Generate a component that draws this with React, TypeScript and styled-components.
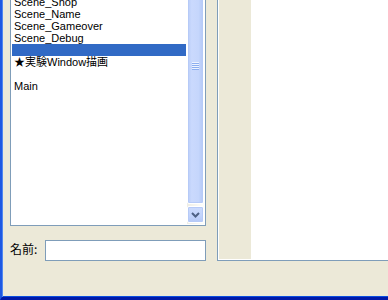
import React from "react";
import styled, { createGlobalStyle } from "styled-components";

const Global = createGlobalStyle`
  html, body { margin: 0; padding: 0; }
  body {
    background: #ECE9D8;
    overflow: hidden;
    font-family: "Liberation Sans", "Noto Sans CJK JP", sans-serif;
  }
`;

const Frame = styled.div`
  box-sizing: border-box;
  width: 388px;
  height: 300px;
  overflow: hidden;
  background: #ECE9D8;
  border-left: 2px solid #1E58E2;
  border-bottom: 3px solid #0019A8;
  box-shadow: inset 1px 0 0 #4F86F0, inset 0 -1px 0 #0A4EE0;
`;

const Body = styled.div`
  display: flex;
  align-items: flex-start;
  gap: 11px;
  margin-top: -5px;
  padding-left: 8px;
`;

const LeftColumn = styled.div`
  display: flex;
  flex-direction: column;
  width: 196px;
  flex: 0 0 196px;
`;

const ListBox = styled.div`
  box-sizing: border-box;
  display: flex;
  height: 231px;
  padding: 0 1px 1px 1px;
  border: 1px solid #7F9DB9;
  background: #FFFFFF;
`;

const Items = styled.div`
  flex: 1;
  min-width: 0;
  overflow: hidden;
`;

const Row = styled.div<{ $selected?: boolean }>`
  height: 12px;
  line-height: 12px;
  padding-left: 2px;
  font-size: 11px;
  white-space: nowrap;
  color: ${(p) => (p.$selected ? "#FFFFFF" : "#000000")};
  background: ${(p) => (p.$selected ? "#316AC5" : "transparent")};
`;

const ScrollBar = styled.div`
  display: flex;
  flex-direction: column;
  width: 17px;
  flex: 0 0 17px;
  margin-left: 1px;
  margin-top: -68px;
  background: linear-gradient(90deg, #EEEDE5, #FEFEFB);
`;

const Thumb = styled.div`
  box-sizing: border-box;
  flex: 1;
  display: flex;
  flex-direction: column;
  align-items: center;
  justify-content: center;
  gap: 0;
  border: 1px solid #FFFFFF;
  border-radius: 2px;
  background: linear-gradient(90deg, #B9CDF8 0%, #CAD9FD 25%, #C5D6FC 70%, #B3C7F5 100%);
  box-shadow: inset 0 0 0 1px #B6CAF7;
  margin-bottom: 2px;
`;

const GripLine = styled.div`
  width: 7px;
  height: 1px;
  border-bottom: 1px solid #8CAEF0;
  background: #EEF3FE;
`;

const ArrowButton = styled.div`
  box-sizing: border-box;
  display: flex;
  align-items: center;
  justify-content: center;
  height: 17px;
  flex: 0 0 17px;
  margin-bottom: 1px;
  border: 1px solid #FFFFFF;
  border-radius: 2px;
  background: linear-gradient(180deg, #CCDBFD 0%, #C1D3FC 60%, #B4C8F6 100%);
  box-shadow: inset 0 0 0 1px #B6CAF7;
`;

const NameRow = styled.div`
  display: flex;
  align-items: center;
  margin-top: 14px;
  height: 21px;
`;

const Label = styled.span`
  width: 35px;
  flex: 0 0 35px;
  font-size: 12px;
  line-height: 12px;
  margin-top: -3px;
  font-family: "Noto Sans CJK JP", "Liberation Sans", sans-serif;
  color: #000000;
  white-space: nowrap;
`;

const TextInput = styled.div`
  box-sizing: border-box;
  flex: 1;
  height: 21px;
  border: 1px solid #7F9DB9;
  background: #FFFFFF;
`;

const Panel = styled.div`
  box-sizing: border-box;
  display: flex;
  flex: 0 0 190px;
  height: 266px;
  padding: 1px;
  border: 1px solid #7F9DB9;
  background: #FFFFFF;
`;

const PanelStrip = styled.div`
  width: 32px;
  background: #ECE9D8;
`;

const rows = [
  "Scene_Shop",
  "Scene_Name",
  "Scene_Gameover",
  "Scene_Debug",
  "",
  "★実験Window描画",
  "",
  "Main",
];

export default function App() {
  return (
    <>
      <Global />
      <Frame>
        <Body>
          <LeftColumn>
            <ListBox>
              <Items>
                {rows.map((r, i) => (
                  <Row key={i} $selected={i === 4}>
                    {r || "\u00a0"}
                  </Row>
                ))}
              </Items>
              <ScrollBar>
                <Thumb>
                  <GripLine />
                  <GripLine />
                  <GripLine />
                  <GripLine />
                </Thumb>
                <ArrowButton>
                  <svg width="9" height="6" viewBox="0 0 9 6">
                    <path d="M1 1 L4.5 4.5 L8 1" fill="none" stroke="#4D6185" strokeWidth="2" />
                  </svg>
                </ArrowButton>
              </ScrollBar>
            </ListBox>
            <NameRow>
              <Label>名前:</Label>
              <TextInput />
            </NameRow>
          </LeftColumn>
          <Panel>
            <PanelStrip />
          </Panel>
        </Body>
      </Frame>
    </>
  );
}
